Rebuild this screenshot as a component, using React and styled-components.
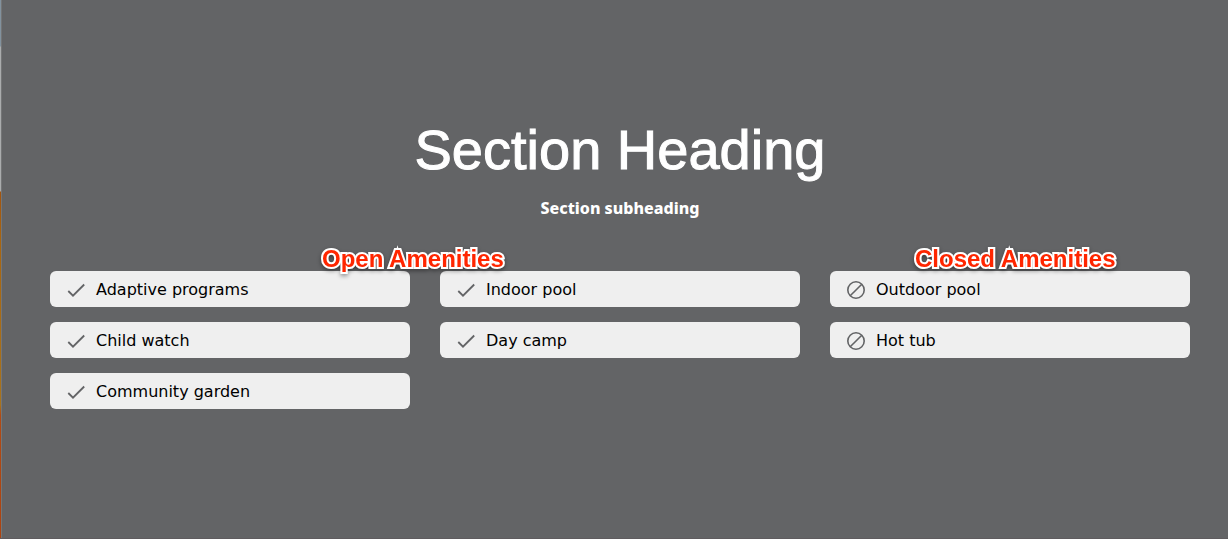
import React from "react";
import styled, { createGlobalStyle } from "styled-components";

const GlobalStyle = createGlobalStyle`
  *, *::before, *::after { box-sizing: border-box; }
  body {
    margin: 0;
    background: #636466;
    color: #000;
    font-family: "DejaVu Sans", Verdana, sans-serif;
  }
`;

const Page = styled.main`
  display: flex;
  min-height: 100vh;
  background: #636466;
  border-bottom: 1px solid #5f5c5f;
`;

const PhotoEdge = styled.div`
  flex: none;
  width: 1px;
  background: linear-gradient(
    #82929e 0 46px,
    #aaacad 47px 191px,
    #a1540f 192px,
    #a8650f 240px,
    #a8731c 405px,
    #b14a14 415px,
    #ac4310 100%
  );
`;

const Section = styled.section`
  flex: 1;
  min-width: 0;
  padding: 116px 38px 120px 48px;
  border-left: 1px solid #747576;
`;

const Heading = styled.h1`
  margin: 0;
  color: #fff;
  font: 400 56px/68px "Liberation Sans", Arial, sans-serif;
  text-align: center;
  -webkit-text-stroke: 1px #fff;
`;

const Subheading = styled.p`
  margin: 12px 0 0;
  color: #fff;
  font: 800 16px/24px "Noto Sans", "Open Sans", sans-serif;
  text-align: center;
`;

const Amenities = styled.div`
  display: grid;
  grid-template-columns: repeat(3, 1fr);
  column-gap: 30px;
  margin-top: 51px;
`;

const Group = styled.div`
  position: relative;
  grid-column: span ${(p) => p.$span};
`;

const Callout = styled.h2`
  position: absolute;
  left: ${(p) => p.$left};
  bottom: 100%;
  z-index: 1;
  margin: 0 0 -2px;
  color: #ff2600;
  font: 700 24px/28px "Liberation Sans", Arial, sans-serif;
  white-space: nowrap;
  -webkit-text-stroke: 4px #fff;
  paint-order: stroke fill;
  stroke-linejoin: round;
  filter: drop-shadow(0 2px 2px rgba(0, 0, 0, 0.4));
`;

const List = styled.ul`
  display: grid;
  grid-template-columns: repeat(${(p) => p.$columns}, 1fr);
  gap: 15px 30px;
  margin: 0;
  padding: 0;
  list-style: none;
`;

const Item = styled.li`
  display: flex;
  align-items: center;
  gap: 10px;
  height: 36px;
  padding: 2px 16px 0;
  border-radius: 6px;
  background: #efefef;
  font-size: 16px;
  line-height: 24px;
`;

const Icon = styled.svg`
  flex: none;
  width: 20px;
  height: 20px;
  fill: none;
  stroke: #636466;
`;

const Check = () => (
  <Icon viewBox="0 0 20 20" aria-hidden="true">
    <path d="M2.3 11 7 15.7 18.2 4.5" strokeWidth="1.8" />
  </Icon>
);

const Closed = () => (
  <Icon viewBox="0 0 20 20" aria-hidden="true">
    <circle cx="10" cy="10" r="8.2" strokeWidth="1.6" />
    <path d="M4.2 15.8 15.8 4.2" strokeWidth="1.6" />
  </Icon>
);

const open = ["Adaptive programs", "Indoor pool", "Child watch", "Day camp", "Community garden"];
const closed = ["Outdoor pool", "Hot tub"];

export default function App() {
  return (
    <>
      <GlobalStyle />
      <Page>
        <PhotoEdge />
        <Section>
          <Heading>Section Heading</Heading>
          <Subheading>Section subheading</Subheading>
          <Amenities>
            <Group $span={2}>
              <Callout $left="272px">Open Amenities</Callout>
              <List $columns={2}>
                {open.map((name) => (
                  <Item key={name}><Check />{name}</Item>
                ))}
              </List>
            </Group>
            <Group $span={1}>
              <Callout $left="85px">Closed Amenities</Callout>
              <List $columns={1}>
                {closed.map((name) => (
                  <Item key={name}><Closed />{name}</Item>
                ))}
              </List>
            </Group>
          </Amenities>
        </Section>
      </Page>
    </>
  );
}
